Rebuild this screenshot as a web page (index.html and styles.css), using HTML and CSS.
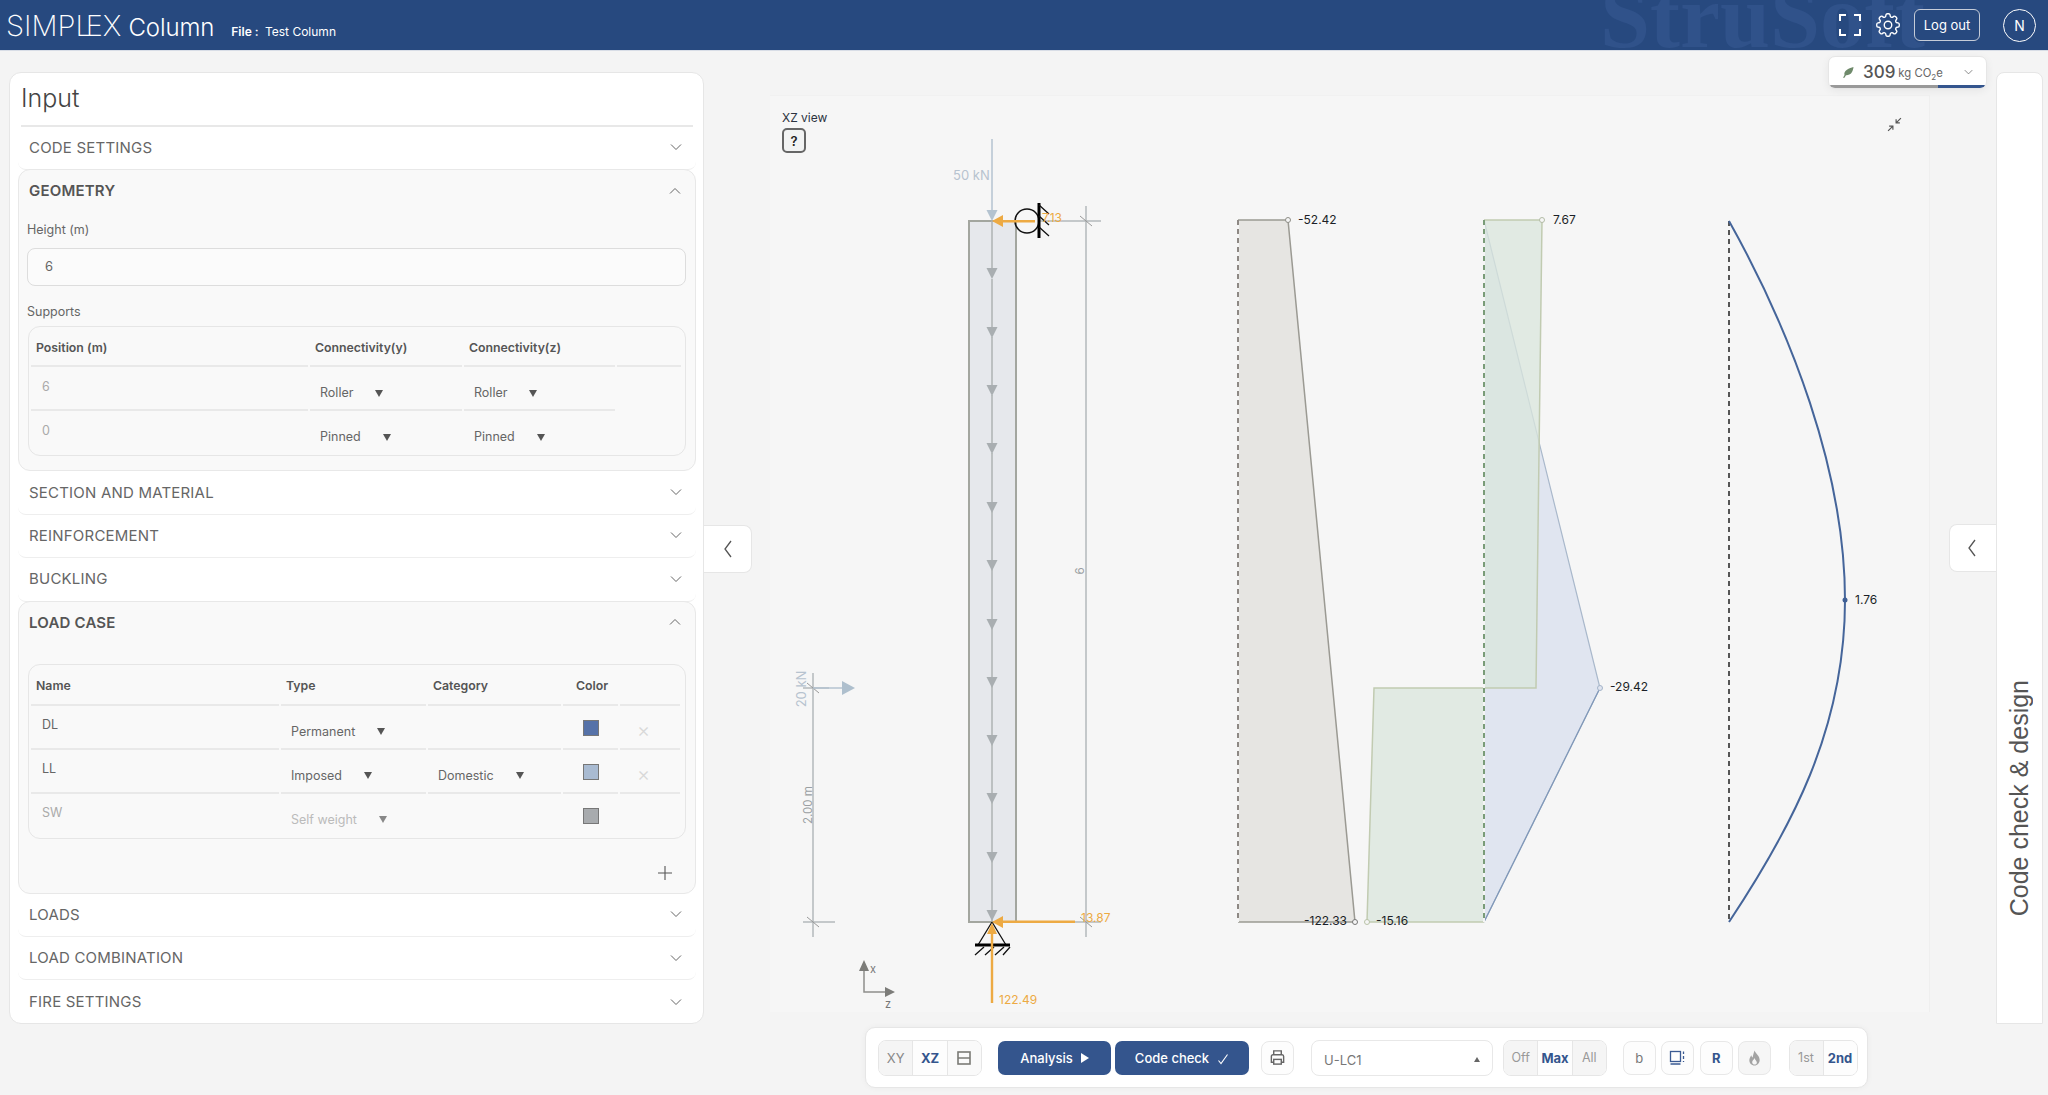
FILE: index.html
```html
<!DOCTYPE html>
<html lang="en">
<head>
<meta charset="utf-8">
<title>SIMPLEX Column</title>
<link rel="stylesheet" href="styles.css">
</head>
<body>
<svg class="defs" width="0" height="0" aria-hidden="true">
  <defs>
    <symbol id="chev-d" viewBox="0 0 12 8"><path d="M1 1.5 6 6.5 11 1.5" fill="none" stroke="currentColor" stroke-width="1"/></symbol>
    <symbol id="chev-u" viewBox="0 0 12 8"><path d="M1 6.5 6 1.5 11 6.5" fill="none" stroke="currentColor" stroke-width="1"/></symbol>
    <symbol id="chev-l" viewBox="0 0 10 18"><path d="M8 1 2 9 8 17" fill="none" stroke="currentColor" stroke-width="1.3"/></symbol>
  </defs>
</svg>
<div class="app">
  <header class="header">
    <div class="brand">
      <span class="logo">SIMP<span class="logo-l">L</span><span class="logo-e">E</span>X</span>
      <span class="product">Column</span>
      <span class="file"><b>File :</b> Test Column</span>
    </div>
    <div class="watermark">StruSoft</div>
    <div class="header-actions">
      <svg class="icon-full" viewBox="0 0 22 22"><path d="M1 7V1H7M15 1H21V7M21 15V21H15M7 21H1V15" fill="none" stroke="#fff" stroke-width="2"/></svg>
      <svg class="icon-gear" viewBox="0 0 24 24" fill="none" stroke="#fff" stroke-width="1.1"><path d="M10.343 3.94c.09-.542.56-.94 1.11-.94h1.093c.55 0 1.02.398 1.11.94l.149.894c.07.424.384.764.78.93.398.164.855.142 1.205-.108l.737-.527a1.125 1.125 0 011.45.12l.773.774c.39.389.44 1.002.12 1.45l-.527.737c-.25.35-.272.806-.107 1.204.165.397.505.71.93.78l.893.15c.543.09.94.56.94 1.109v1.094c0 .55-.397 1.02-.94 1.11l-.893.149c-.425.07-.765.383-.93.78-.165.398-.143.854.107 1.204l.527.738c.32.447.269 1.06-.12 1.45l-.774.773a1.125 1.125 0 01-1.449.12l-.738-.527c-.35-.25-.806-.272-1.203-.107-.397.165-.71.505-.781.929l-.149.894c-.09.542-.56.94-1.11.94h-1.094c-.55 0-1.019-.398-1.11-.94l-.148-.894c-.071-.424-.384-.764-.781-.93-.398-.164-.854-.142-1.204.108l-.738.527c-.447.32-1.06.269-1.45-.12l-.773-.774a1.125 1.125 0 01-.12-1.45l.527-.737c.25-.35.273-.806.108-1.204-.165-.397-.505-.71-.93-.78l-.894-.15c-.542-.09-.94-.56-.94-1.109v-1.094c0-.55.398-1.02.94-1.11l.894-.149c.424-.07.765-.383.93-.78.165-.398.143-.854-.107-1.204l-.527-.738a1.125 1.125 0 01.12-1.45l.773-.773a1.125 1.125 0 011.45-.12l.737.527c.35.25.807.272 1.204.107.397-.165.71-.505.78-.929l.15-.894z"/><circle cx="12" cy="12" r="3"/></svg>
      <button class="logout">Log out</button>
      <div class="avatar">N</div>
    </div>
  </header>

  <main class="main">
    <section class="panel">
      <h1 class="panel-title">Input</h1>
      <div class="acc"><span>CODE SETTINGS</span><svg class="chev"><use href="#chev-d"/></svg></div>

      <div class="acc-open geo">
        <div class="acc acc-head"><span>GEOMETRY</span><svg class="chev"><use href="#chev-u"/></svg></div>
        <div class="acc-body">
          <div class="field-label">Height (m)</div>
          <div class="input">6</div>
          <div class="field-label supports-label">Supports</div>
          <div class="tbl tbl-sup">
            <div class="tr th"><div>Position (m)</div><div>Connectivity(y)</div><div>Connectivity(z)</div><div></div></div>
            <div class="tr"><div class="td-text muted">6</div><div class="td-sel"><span class="sel">Roller<i></i></span></div><div class="td-sel"><span class="sel">Roller<i></i></span></div><div class="blank"></div></div>
            <div class="tr last"><div class="td-text muted">0</div><div class="td-sel"><span class="sel">Pinned<i></i></span></div><div class="td-sel"><span class="sel">Pinned<i></i></span></div><div class="blank"></div></div>
          </div>
        </div>
      </div>

      <div class="acc"><span>SECTION AND MATERIAL</span><svg class="chev"><use href="#chev-d"/></svg></div>
      <div class="acc"><span>REINFORCEMENT</span><svg class="chev"><use href="#chev-d"/></svg></div>
      <div class="acc"><span>BUCKLING</span><svg class="chev"><use href="#chev-d"/></svg></div>

      <div class="acc-open lc">
        <div class="acc acc-head"><span>LOAD CASE</span><svg class="chev"><use href="#chev-u"/></svg></div>
        <div class="acc-body lc-body">
          <div class="tbl tbl-lc">
            <div class="tr th"><div>Name</div><div>Type</div><div>Category</div><div class="th-color">Color</div><div></div></div>
            <div class="tr"><div class="td-text">DL</div><div class="td-sel"><span class="sel">Permanent<i></i></span></div><div></div><div class="td-sw"><span class="swatch sw-blue"></span></div><div class="td-x">×</div></div>
            <div class="tr"><div class="td-text">LL</div><div class="td-sel"><span class="sel">Imposed<i></i></span></div><div class="td-sel"><span class="sel">Domestic<i></i></span></div><div class="td-sw"><span class="swatch sw-light"></span></div><div class="td-x">×</div></div>
            <div class="tr last"><div class="td-text muted">SW</div><div class="td-sel dis"><span class="sel">Self weight<i></i></span></div><div></div><div class="td-sw"><span class="swatch sw-grey"></span></div><div></div></div>
          </div>
          <div class="add"><svg class="icon-plus" viewBox="0 0 14 14"><path d="M7 0V14M0 7H14" stroke="#555" stroke-width="1.100" fill="none"/></svg></div>
        </div>
      </div>

      <div class="acc"><span>LOADS</span><svg class="chev"><use href="#chev-d"/></svg></div>
      <div class="acc"><span>LOAD COMBINATION</span><svg class="chev"><use href="#chev-d"/></svg></div>
      <div class="acc acc-end"><span>FIRE SETTINGS</span><svg class="chev"><use href="#chev-d"/></svg></div>
    </section>

    <button class="toggle toggle-left"><svg class="chev-side"><use href="#chev-l"/></svg></button>

    <div class="view">
      <div class="canvas">
        <div class="view-label">XZ view</div>
        <button class="help">?</button>
        <svg class="icon-compress" viewBox="0 0 14 14" fill="none" stroke="#555" stroke-width="1.1"><path d="M13 1 8.5 5.5M8.5 2V5.5H12M1 13 5.5 8.5M5.5 12V8.5H2"/></svg>
        <svg class="drawing" viewBox="770 95 1160 917" width="1160" height="917">
          <defs>
            <path id="tip" d="M-5.500 -11H5.500L0 0Z"/>
          </defs>

          <!-- dimensions -->
          <g stroke="#b4b9bc" stroke-width="1.500" fill="none">
            <path d="M1086 206V937M1040 221H1101M1050 922H1101M813 673V937M803 688H829M803 922H835"/>
            <path d="M1080 216 1092 226M1080 917 1092 927M807 683 819 693M807 917 819 927" stroke="#999" stroke-width="1"/>
          </g>
          <text class="t-dim" transform="translate(1084 571) rotate(-90)" text-anchor="middle">6</text>
          <text class="t-dim" transform="translate(812 805) rotate(-90)" text-anchor="middle">2.00 m</text>
          <text class="t-load" transform="translate(806 689) rotate(-90)" text-anchor="middle">20 kN</text>
          <path d="M813 688H844" stroke="#b4c3d0" stroke-width="1.500"/>
          <path d="M842 681 855 688 842 695Z" fill="#aebfcd"/>

          <!-- column -->
          <rect x="969" y="221" width="47" height="701" fill="#e6e8ec" stroke="#a3a69f" stroke-width="2"/>
          <path d="M992 221V922" stroke="#aeb2b3" stroke-width="1.500" stroke-dasharray="52 6"/>
          <g fill="#a9aeb1">
            <use href="#tip" x="992" y="279"/><use href="#tip" x="992" y="338"/><use href="#tip" x="992" y="396"/>
            <use href="#tip" x="992" y="454"/><use href="#tip" x="992" y="513"/><use href="#tip" x="992" y="571"/>
            <use href="#tip" x="992" y="630"/><use href="#tip" x="992" y="688"/><use href="#tip" x="992" y="746"/>
            <use href="#tip" x="992" y="804"/><use href="#tip" x="992" y="863"/><use href="#tip" x="992" y="921"/>
          </g>
          <path d="M992 139V212" stroke="#b4c3d0" stroke-width="1.500"/>
          <use href="#tip" x="992" y="221" fill="#b4c3d0"/>
          <text class="t-load" x="953" y="180">50 kN</text>

          <!-- supports -->
          <circle cx="1027" cy="221" r="12" fill="none" stroke="#111" stroke-width="1.500"/>
          <path d="M1039 203V238" stroke="#000" stroke-width="3"/>
          <path d="M1039 205 1049 214M1039 216 1049 225M1039 227 1049 236" stroke="#111" stroke-width="1.300"/>
          <path d="M992 922 978 945M992 922 1006 945" stroke="#111" stroke-width="1.300"/>
          <path d="M975 945H1010" stroke="#000" stroke-width="3"/>
          <path d="M984 947 975 955M994 947 985 955M1004 947 995 955M1010 947 1003 955" stroke="#111" stroke-width="1.300"/>

          <!-- reactions -->
          <g fill="#edaa43">
            <path d="M1035 220V222.500H1003V227L992 221 1003 215V220Z"/>
            <path d="M1075 920.500V923H1003V928L992 922 1003 916V920.500Z"/>
            <path d="M990.800 1003V934H987L992 923 997 934H993.200V1003Z"/>
          </g>
          <text class="t-react" x="1042" y="222">7.13</text>
          <text class="t-react" x="1081" y="922">13.87</text>
          <text class="t-react" x="999" y="1004">122.49</text>

          <!-- axes -->
          <path d="M864 970V992H886" fill="none" stroke="#8f8f8c" stroke-width="1.500"/>
          <path d="M859 971 864 960 869 971ZM885 987 895 992 885 997Z" fill="#7c7c79"/>
          <text class="t-axis" x="870" y="973">x</text>
          <text class="t-axis" x="885" y="1008">z</text>

          <!-- N diagram -->
          <path d="M1238 220H1288L1355 922H1238Z" fill="#e6e5e2"/>
          <path d="M1238 220H1288L1355 922H1238" fill="none" stroke="#9b9a93" stroke-width="1.500"/>
          <path d="M1238 220V922" stroke="#f5f5f5" stroke-width="2"/>
          <path d="M1238 220V922" stroke="#8d8884" stroke-width="2" stroke-dasharray="5 4"/>
          <circle cx="1288" cy="220" r="2.500" fill="#f6f6f6" stroke="#8d8d86"/>
          <circle cx="1355" cy="922" r="2.500" fill="#f6f6f6" stroke="#777"/>

          <!-- Vy/Vz diagrams -->
          <path d="M1484 220 1600 688 1484 922Z" fill="#e0e5f0"/>
          <path d="M1484 220 1600 688 1484 922" fill="none" stroke="#a9b8cb" stroke-width="1.200"/>
          <path d="M1600 688 1484 922" fill="none" stroke="#7f97b8" stroke-width="1.200"/>
          <path d="M1484 220H1542L1536 688H1374L1367 922H1484Z" fill="#dae5dc" fill-opacity=".75"/>
          <path d="M1484 220H1542L1536 688H1374L1367 922H1484" fill="none" stroke="#c1cbb1" stroke-width="1.500"/>
          <path d="M1484 220V922" stroke="#f5f5f5" stroke-width="2"/>
          <path d="M1484 220V922" stroke="#7a9c78" stroke-width="2" stroke-dasharray="5 4"/>
          <circle cx="1542" cy="220" r="2.500" fill="#f6f6f6" stroke="#b3bca6"/>
          <circle cx="1367" cy="922" r="2.500" fill="#f6f6f6" stroke="#b9c3a8"/>
          <circle cx="1600" cy="688" r="2.500" fill="#e0e5f0" stroke="#a4b4c9"/>

          <!-- deflection -->
          <path d="M1729 221V922" stroke="#555" stroke-width="2" stroke-dasharray="5 4"/>
          <path d="M1729 221C1790 330 1845 470 1845 600C1845 730 1790 830 1729 922" fill="none" stroke="#45659a" stroke-width="2"/>
          <circle cx="1845" cy="600" r="2.500" fill="#3f5f95"/>

          <text class="t-val" x="1298" y="224">-52.42</text>
          <text class="t-val" x="1304" y="925">-122.33</text>
          <text class="t-val" x="1553" y="224">7.67</text>
          <text class="t-val" x="1376" y="925">-15.16</text>
          <text class="t-val" x="1610" y="691">-29.42</text>
          <text class="t-val" x="1855" y="604">1.76</text>
        </svg>
      </div>

      <div class="toolbar">
        <div class="seg seg-view">
          <button class="seg-btn">XY</button>
          <button class="seg-btn on">XZ</button>
          <button class="seg-btn"><svg class="icon-split" viewBox="0 0 14 14" fill="none" stroke="#7b7b76" stroke-width="1.600"><rect x="1" y="1" width="12" height="12"/><path d="M1 7H13"/></svg></button>
        </div>
        <button class="primary btn-analysis">Analysis <svg class="icon-play" viewBox="0 0 8 10"><path d="M0 0 8 5 0 10Z" fill="#fff"/></svg></button>
        <button class="primary btn-check">Code check <svg class="icon-check" viewBox="0 0 12 12"><path d="M1.500 7.500 4 10.500 10.500 1.500" fill="none" stroke="#fff" stroke-width="1.100"/></svg></button>
        <button class="square btn-print"><svg class="icon-print" viewBox="0 0 18 18" fill="none" stroke="#666" stroke-width="1.500"><path d="M5 6V2H13V6M5 14H2.500V8C2.500 7 3 6 4 6H14C15 6 15.500 7 15.500 8V14H13"/><rect x="5" y="11" width="8" height="5"/></svg></button>
        <div class="combo"><span>U-LC1</span><i></i></div>
        <div class="seg seg-diag">
          <button class="seg-btn off">Off</button>
          <button class="seg-btn on">Max</button>
          <button class="seg-btn off">All</button>
        </div>
        <button class="square sq-b">b</button>
        <button class="square sq-n"><svg class="icon-sec" viewBox="0 0 16 16" fill="none" stroke="#3a5a92" stroke-width="1.300"><rect x="1.500" y="1.500" width="10" height="10"/><path d="M1.500 14H11.500M14.500 1.500V4M14.500 6V9M14.500 11V12" /></svg></button>
        <button class="square sq-n sq-r">R</button>
        <button class="square sq-n sq-fire"><svg class="icon-fire" viewBox="0 0 14 16"><path d="M7 0C8 3 12 5 12.500 9.500C13 13 10 16 7 16C4 16 1 13.500 1.500 9.500C2 7.500 3 6 3.500 5C4 6.500 4.500 7 5 7.500C5.500 5 6 3 7 0ZM7 8C6.500 10 4.500 10.500 4.500 12.500C4.500 14 6 15 7 15C8.500 15 9.800 14 9.500 12.500C9.300 11 7.500 10 7 8Z" fill="#a3a3a3" fill-rule="evenodd"/></svg></button>
        <div class="seg seg-order">
          <button class="seg-btn off">1st</button>
          <button class="seg-btn on">2nd</button>
        </div>
      </div>
    </div>

    <button class="toggle toggle-right"><svg class="chev-side"><use href="#chev-l"/></svg></button>

    <aside class="side"><span>Code check &amp; design</span></aside>

    <div class="co2">
      <svg class="icon-leaf" viewBox="0 0 12 12"><path d="M1 11.500C1.500 11 2 10 2.500 9C1.500 6 4.500 2.500 11.500 1C11 6 8.500 9.500 4 9.200C3.500 10 3 11 2.200 12Z" fill="#6f8a6b"/></svg>
      <span class="co2-num">309</span>
      <span class="co2-unit">kg CO<sub>2</sub>e</span>
      <svg class="chev co2-chev"><use href="#chev-d"/></svg>
      <div class="co2-bar"></div>
    </div>
  </main>
</div>
</body>
</html>
```

FILE: styles.css
```css
* { box-sizing: border-box; }
html, body { margin: 0; height: 100%; }
body { font-family: Inter, "Liberation Sans", sans-serif; background: #f4f4f4; color: #555; overflow: hidden; }
.defs { position: absolute; }
button { font-family: inherit; cursor: pointer; padding: 0; }

.app { width: 2048px; height: 1095px; display: flex; flex-direction: column; }

/* header */
.header { position: relative; height: 51px; flex: none; background: #27497f; color: #fff; display: flex; align-items: center; overflow: hidden; border-bottom: 1px solid #d8dde6; }
.brand { display: flex; align-items: baseline; padding-left: 6px; }
.logo { font-size: 29px; font-weight: 200; letter-spacing: 0; }
.logo-l { letter-spacing: -6px; }
.logo-e { letter-spacing: 0; }
.product { font-size: 24px; font-weight: 300; margin-left: 7px; letter-spacing: -.1px; }
.file { font-size: 12px; margin-left: 17px; }
.file b { font-weight: 600; margin-right: 3px; }
.watermark { position: absolute; left: 1600px; top: -28px; font-family: "Liberation Serif", serif; font-weight: 700; font-size: 90px; line-height: 90px; color: #30528a; white-space: nowrap; }
.header-actions { position: relative; margin-left: auto; display: flex; align-items: center; padding-right: 12px; }
.icon-full { width: 22px; height: 22px; flex: none; }
.icon-gear { width: 30px; height: 30px; margin-left: 12px; flex: none; }
.logout { width: 66px; height: 32px; margin-left: 11px; flex: none; background: transparent; border: 1.500px solid #c5ccd8; border-radius: 6px; color: #fff; font-size: 13px; }
.avatar { width: 33px; height: 33px; margin-left: 23px; flex: none; border: 1px solid #fff; border-radius: 50%; display: flex; align-items: center; justify-content: center; font-size: 14px; }

/* layout */
.main { position: relative; flex: 1; display: flex; align-items: flex-start; padding: 21px 0 0 9px; }

/* input panel */
.panel { width: 695px; height: 952px; flex: none; background: #fff; border: 1px solid #e6e6e6; border-radius: 12px; padding: 0 7px 0 8px; }
.panel-title { margin: 0 3px; height: 54px; border-bottom: 2px solid #e8e8e8; font-size: 25px; font-weight: 300; line-height: 50px; color: #444; }
.acc { height: 43.400px; display: flex; align-items: center; justify-content: space-between; padding: 0 14px 1px 11px; font-size: 15px; letter-spacing: .2px; color: #666; border-bottom: 1.500px solid #eee; border-radius: 0 0 8px 8px; }
.panel-title + .acc { padding-bottom: 2px; }
.acc-end { border-bottom: 0; }
.chev { width: 12px; height: 8px; color: #666; flex: none; }
.acc-open { background: #f9f9f9; border: 1.500px solid #e8e8e8; border-radius: 12px; margin-top: -1px; }
.geo { height: 302px; }
.lc { height: 293px; }
.acc-head { height: 41px; padding: 0 14px 0 10px; font-weight: 600; color: #555; border-bottom: 0; }
.acc-body { padding: 0 9px 0 8px; }
.field-label { font-size: 12.500px; color: #666; line-height: 16px; padding-top: 11px; }
.input { height: 38px; margin-top: 10px; border: 1.500px solid #ddd; border-radius: 8px; background: #fbfbfb; font-size: 13px; color: #666; line-height: 35px; padding-left: 17px; }
.supports-label { padding-top: 18px; }

/* tables */
.tbl { margin-top: 6px; margin-left: 1px; border: 1.500px solid #e6e6e6; border-radius: 12px; padding: 0 2px; font-size: 12.500px; color: #666; }
.tr { display: grid; column-gap: 2px; }
.tbl-sup .tr { grid-template-columns: 277px 152px 151px 64px; }
.tbl-lc .tr { grid-template-columns: 248px 145px 133px 55px 60px; }
.tr > div { height: 44px; border-bottom: 2px solid #e9e9e9; }
.tr.last > div, .tr > .blank { border-bottom: 0; }
.th > div { height: 40px; padding-left: 5px; font-size: 12.300px; font-weight: 600; color: #555; line-height: 41px; }
.tbl-lc .th > div { height: 41px; line-height: 41px; }
.tbl-lc .th > .th-color { padding-left: 13px; }
.td-text { padding: 11px 0 0 11px; line-height: 18px; }
.tbl-lc .td-text { padding-top: 10px; }
.td-sel { padding: 17px 0 0 10px; line-height: 18px; }
.muted { color: #aaa; }
.dis { color: #bbb; }
.sel { display: inline-flex; align-items: center; gap: 22px; }
.sel i { width: 0; height: 0; border-left: 4px solid transparent; border-right: 4px solid transparent; border-top: 7px solid #555; }
.dis .sel i { border-top-color: #888; }
.td-sw { padding: 14px 0 0 20px; }
.swatch { display: block; width: 16px; height: 16px; border: 1px solid #777; }
.sw-blue { background: #5672a8; }
.sw-light { background: #a9bbd2; }
.sw-grey { background: #a8abae; }
.td-x { padding: 14px 0 0 17px; color: #d8d8d8; font-size: 20px; line-height: 20px; font-weight: 300; }
.lc-body { padding-top: 21px; }
.tbl-lc { margin-top: 0; }
.add { display: flex; justify-content: flex-end; padding: 27px 14px 0 0; }
.icon-plus { width: 14px; height: 14px; }

/* toggles */
.toggle { flex: none; background: #fff; border: 1.500px solid #e6e6e6; display: flex; align-items: center; justify-content: center; color: #555; }
.toggle-left { width: 48px; height: 48px; margin-top: 453px; border-left: 0; border-radius: 0 8px 8px 0; }
.toggle-right { width: 47px; height: 48px; margin: 452px 0 0 19px; padding-right: 2px; border-right: 0; border-radius: 8px 0 0 8px; }
.chev-side { width: 10px; height: 18px; }

/* view */
.view { width: 1160px; margin-left: 18px; margin-top: 23px; flex: none; }
.canvas { position: relative; width: 1160px; height: 917px; background: #f6f6f6; border-top: 1px solid #f1f1f1; border-right: 1px solid #efefef; }
.drawing { display: block; margin-top: -1px; }
.view-label { position: absolute; left: 12px; top: 14px; font-size: 12px; color: #2b3340; }
.help { position: absolute; left: 12px; top: 32px; width: 24px; height: 25px; background: #f2f3f3; border: 2px solid #666; border-radius: 5px; font-size: 13px; font-weight: 600; color: #222; }
.icon-compress { position: absolute; left: 1117px; top: 21px; width: 15px; height: 15px; }
.t-dim { font-size: 11.500px; fill: #9a9fa2; }
.t-load { font-size: 13px; fill: #b7c3cf; }
.t-react { font-size: 12px; fill: #edaa43; }
.t-axis { font-size: 11px; fill: #777; }
.t-val { font-size: 12px; fill: #1b1f27; }

/* toolbar */
.toolbar { margin: 15px 0 0 95px; width: 1003px; height: 61px; background: #fff; border: 1.500px solid #e6e6e6; border-radius: 10px; display: flex; align-items: center; padding-left: 12px; box-shadow: 0 0 6px rgba(0,0,0,.04); }
.seg { display: flex; height: 36px; border: 1.500px solid #e6e6e6; border-radius: 8px; overflow: hidden; flex: none; }
.seg-view { width: 104px; }
.seg-diag { width: 104px; margin-left: 10px; }
.seg-order { width: 69px; margin-left: 18px; }
.seg-btn { flex: 1; border: 0; border-left: 1px solid #e6e6e6; background: #f5f5f5; color: #888; font-size: 13px; display: flex; align-items: center; justify-content: center; }
.seg-btn:first-child { border-left: 0; }
.seg-btn.on { background: #fdfdfd; color: #34558d; font-weight: 700; }
.seg-btn.off { color: #999; font-size: 12.500px; }
.seg-btn:not(.on):not(.off) { background: #fafafa; }
.seg-view .seg-btn:first-child { background: #f5f5f5; }
.icon-split { width: 14px; height: 14px; }
.primary { height: 34px; background: #34558d; color: #fff; border: 0; border-radius: 7px; font-size: 13px; font-weight: 500; flex: none; display: flex; align-items: center; justify-content: center; gap: 8px; }
.btn-analysis { width: 113px; margin-left: 16px; }
.btn-check { width: 134px; margin-left: 4px; }
.icon-play { width: 8px; height: 10px; }
.icon-check { width: 12px; height: 12px; margin-top: 3px; }
.square { width: 32.500px; height: 34px; flex: none; background: #fdfdfd; border: 1.500px solid #e8e8e8; border-radius: 8px; display: flex; align-items: center; justify-content: center; font-size: 13px; color: #777; }
.btn-print { margin-left: 12px; }
.icon-print { width: 17px; height: 17px; }
.combo { width: 182px; height: 36px; margin-left: 17.500px; flex: none; border: 1.500px solid #e8e8e8; border-radius: 8px; display: flex; align-items: center; justify-content: space-between; padding: 4px 12px 0 12px; font-size: 13px; color: #777; }
.combo i { width: 0; height: 0; border-left: 3.500px solid transparent; border-right: 3.500px solid transparent; border-bottom: 5px solid #666; }
.sq-b { margin-left: 16px; }
.sq-n { margin-left: 5.500px; }
.sq-r { color: #34558d; font-weight: 700; margin-left: 6.500px; }
.sq-fire { background: #f6f6f6; }
.icon-sec { width: 16px; height: 16px; }
.icon-fire { width: 13px; height: 16px; }

/* side */
.side { width: 47px; height: 952px; flex: none; background: #fff; border: 1.500px solid #e6e6e6; border-radius: 8px 8px 0 0; display: flex; align-items: flex-end; justify-content: center; padding-bottom: 107px; }
.side span { writing-mode: vertical-rl; transform: rotate(180deg); font-family: "Liberation Sans", sans-serif; font-size: 25px; color: #555; white-space: nowrap; }

/* co2 */
.co2 { position: absolute; left: 1828px; top: 5px; width: 159px; height: 33px; background: #fff; border: 1px solid #e6e6e6; border-radius: 7px; display: flex; align-items: center; padding: 0 0 2px 13px; box-shadow: 0 2px 8px rgba(0,0,0,.06); overflow: hidden; }
.icon-leaf { width: 12px; height: 12px; flex: none; }
.co2-num { margin-left: 9px; font-size: 17px; font-weight: 500; color: #555; }
.co2-unit { margin-left: 3px; font-size: 11.300px; color: #666; margin-top: 3px; }
.co2-unit sub { font-size: 8px; line-height: 0; }
.co2-chev { margin-left: auto; margin-right: 13px; width: 9px; height: 6px; }
.co2-bar { position: absolute; left: 1px; right: 1px; bottom: 0; height: 3px; background: linear-gradient(to right, #999 70%, #34558d 70%); }
```
